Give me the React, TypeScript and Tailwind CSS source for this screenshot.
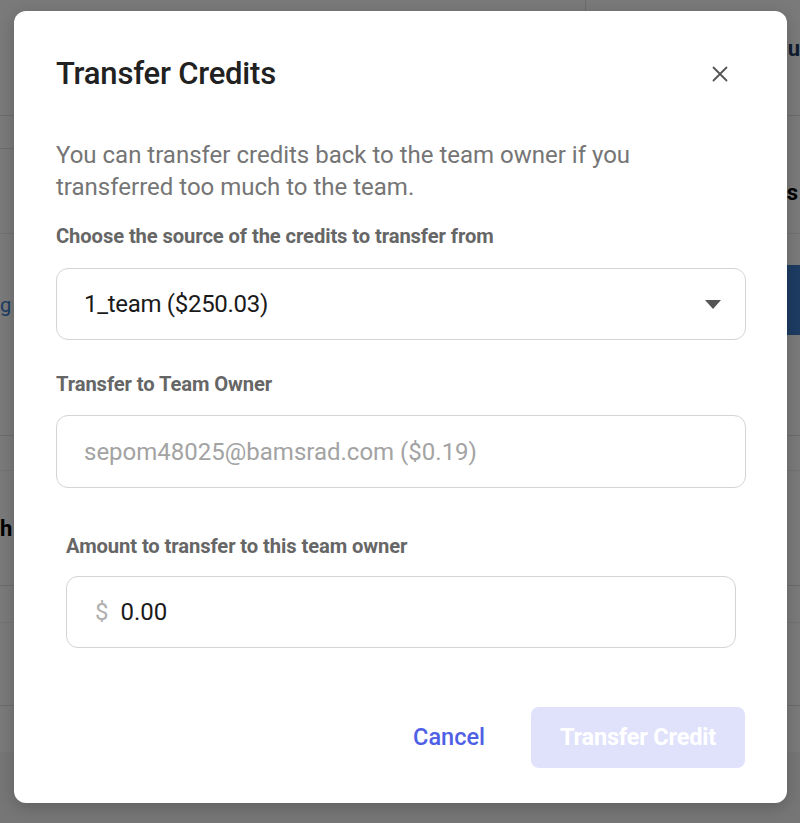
import React from "react";

export default function App() {
  return (
    <div
      className="relative h-[823px] w-full overflow-hidden bg-[#f4f4f4]"
      style={{ fontFamily: "Roboto, 'Noto Sans', Arial, sans-serif" }}
    >
      {/* background page (dimmed) */}
      <div className="absolute inset-0">
        <div className="absolute left-0 right-0 top-[115px] h-px bg-[#d6d6d6]" />
        <div className="absolute left-0 w-[60px] top-[148px] h-px bg-[#d6d6d6]" />
        <div className="absolute left-0 right-0 top-[233px] h-px bg-[#e0e0e0]" />
        <div className="absolute left-0 right-0 top-[435px] h-px bg-[#d6d6d6]" />
        <div className="absolute left-0 right-0 top-[470px] h-px bg-[#e6e6e6]" />
        <div className="absolute left-0 right-0 top-[585px] h-px bg-[#d6d6d6]" />
        <div className="absolute left-0 right-0 top-[622px] h-px bg-[#e6e6e6]" />
        <div className="absolute left-0 right-0 top-[705px] h-px bg-[#d6d6d6]" />
        <div className="absolute left-0 right-0 top-[752px] h-[71px] bg-[#ececec]" />
        <div className="absolute left-[585px] top-0 h-[115px] w-px bg-[#d6d6d6]" />
        <div className="absolute right-0 top-[265px] h-[70px] w-[20px] bg-[#3b78c4]" />
        <div className="absolute left-0 top-[290px] text-[20px] text-[#3b78c4]">g</div>
        <div className="absolute left-0 top-[512px] text-[22px] font-bold text-black">h</div>
        <div className="absolute right-[2px] top-[176px] text-[22px] font-bold text-black">s</div>
        <div className="absolute right-0 top-[32px] text-[22px] font-bold text-[#1e3a5f]">u</div>
      </div>

      {/* overlay */}
      <div className="absolute inset-0 bg-black/50 pl-[14px] pt-[11px]">
        <div className="flex h-[792px] w-[773px] flex-col rounded-[12px] bg-white px-[42px] pt-[45px] shadow-[0_4px_16px_rgba(0,0,0,0.2)]">
          <div className="flex items-start justify-between">
            <h2 className="text-[31px] font-medium leading-[36px] tracking-[-0.2px] text-[#212121]">
              Transfer Credits
            </h2>
            <button className="mr-[13px] mt-[6px] flex h-[24px] w-[24px] items-center justify-center text-[#555]">
              <svg width="16" height="16" viewBox="0 0 16 16" fill="none">
                <path d="M1.5 1.5L14.5 14.5M14.5 1.5L1.5 14.5" stroke="currentColor" strokeWidth="1.8" strokeLinecap="round" />
              </svg>
            </button>
          </div>

          <p className="mt-[47px] w-[620px] text-[24px] leading-[32px] text-[#757575]">
            You can transfer credits back to the team owner if you transferred too much to the team.
          </p>

          <label className="mt-[21px] text-[20.2px] font-bold leading-[24px] tracking-[-0.1px] text-[#666666]">
            Choose the source of the credits to transfer from
          </label>

          <div className="mt-[20px] flex h-[72px] w-[690px] items-center justify-between rounded-[12px] border border-[#d4d4d4] pl-[27px] pr-[24px]">
            <span className="text-[24px] tracking-[-0.3px] text-[#1a1a1a]">1_team ($250.03)</span>
            <svg width="16" height="9" viewBox="0 0 16 9">
              <path d="M0 0H16L8 9Z" fill="#555" />
            </svg>
          </div>

          <label className="mt-[32px] text-[20.2px] font-bold leading-[24px] tracking-[-0.1px] text-[#666666]">
            Transfer to Team Owner
          </label>

          <div className="mt-[19px] flex h-[73px] w-[690px] items-center rounded-[12px] border border-[#d4d4d4] pl-[27px]">
            <span className="text-[24px] text-[#a3a3a3]">sepom48025@bamsrad.com ($0.19)</span>
          </div>

          <div className="px-[10px]">
            <label className="mt-[46px] block text-[20.2px] font-bold leading-[24px] tracking-[-0.1px] text-[#666666]">
              Amount to transfer to this team owner
            </label>

            <div className="mt-[18px] flex h-[72px] w-[670px] items-center rounded-[12px] border border-[#d4d4d4] pl-[28px]">
              <span className="text-[24px] text-[#b0b0b0]">$</span>
              <span className="ml-[12px] text-[24px] text-[#1a1a1a]">0.00</span>
            </div>
          </div>

          <div className="mt-[59px] flex items-center justify-end">
            <button className="mr-[46px] text-[23.5px] font-medium text-[#4f5fe6]">Cancel</button>
            <button className="flex h-[61px] w-[214px] items-center justify-center rounded-[8px] bg-[#e0e2fb] text-[23.5px] font-bold tracking-[-0.2px] text-white">
              Transfer Credit
            </button>
          </div>
        </div>
      </div>
    </div>
  );
}
